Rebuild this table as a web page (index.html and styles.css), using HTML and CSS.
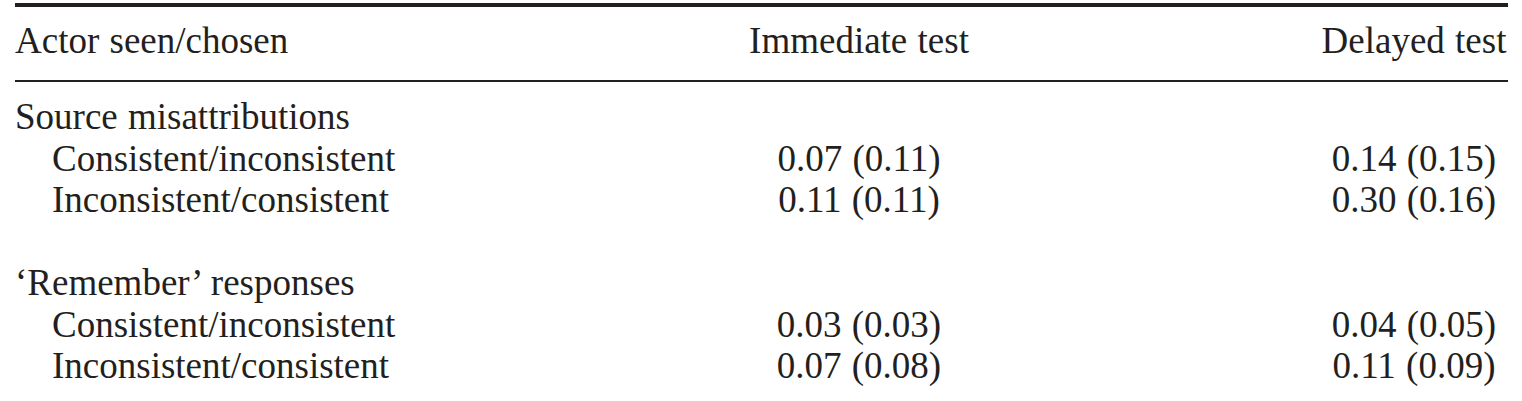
FILE: index.html
```html
<!DOCTYPE html>
<html>
<head>
    <meta charset="utf-8">
    <link rel="stylesheet" href="styles.css">
</head>
<body>
    <div class="table">
        <div class="row head">
            <div class="cell">Actor seen/chosen</div>
            <div class="cell num">Immediate test</div>
            <div class="cell delayed">Delayed test</div>
        </div>

        <div class="body">
            <div class="group">
                <div class="row">
                    <div class="cell">Source misattributions</div>
                </div>
                <div class="row">
                    <div class="cell sub">Consistent/inconsistent</div>
                    <div class="cell num">0.07 (0.11)</div>
                    <div class="cell delayed">0.14 (0.15)</div>
                </div>
                <div class="row">
                    <div class="cell sub">Inconsistent/consistent</div>
                    <div class="cell num">0.11 (0.11)</div>
                    <div class="cell delayed">0.30 (0.16)</div>
                </div>
            </div>

            <div class="group">
                <div class="row">
                    <div class="cell">‘Remember’ responses</div>
                </div>
                <div class="row">
                    <div class="cell sub">Consistent/inconsistent</div>
                    <div class="cell num">0.03 (0.03)</div>
                    <div class="cell delayed">0.04 (0.05)</div>
                </div>
                <div class="row">
                    <div class="cell sub">Inconsistent/consistent</div>
                    <div class="cell num">0.07 (0.08)</div>
                    <div class="cell delayed">0.11 (0.09)</div>
                </div>
            </div>
        </div>
    </div>
</body>
</html>
```

FILE: styles.css
```css
body {
    margin: 0;
    padding: 3px 0 0 15px;
    background: #ffffff;
    color: #231f20;
    font-family: 'Liberation Serif', 'Times New Roman', serif;
    font-size: 37px;
    line-height: 41.5px;
    word-spacing: 1px;
}

.table {
    width: 1493px;
    border-top: 4px solid #231f20;
}

.head {
    padding: 13px 0 18.5px;
    border-bottom: 2px solid #231f20;
}

.body {
    padding-top: 14px;
}

.group + .group {
    margin-top: 41.5px;
}

.row {
    display: grid;
    grid-template-columns: 694px 300px 1fr;
}

.cell {
    white-space: nowrap;
}

.sub {
    padding-left: 37px;
}

.num {
    text-align: center;
}

.delayed {
    justify-self: end;
    width: 188px;
    text-align: center;
}
```
